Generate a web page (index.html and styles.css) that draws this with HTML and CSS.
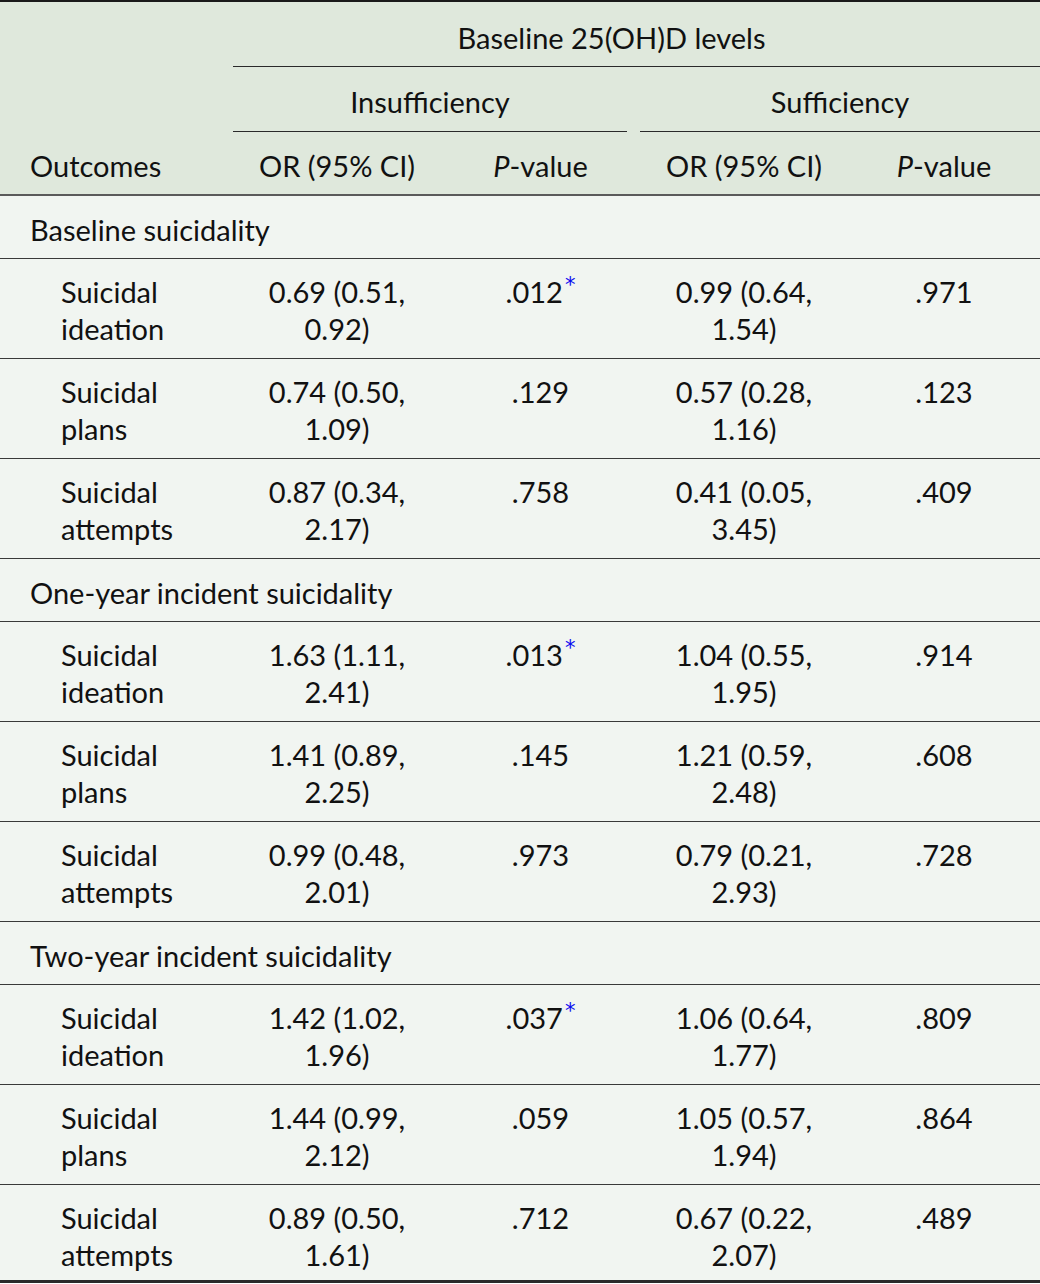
FILE: index.html
```html
<!DOCTYPE html>
<html>
<head>
<meta charset="utf-8">
<link rel="stylesheet" href="styles.css">
</head>
<body>
<table class="tbl">
  <colgroup>
    <col class="c1"><col class="c2"><col class="c3"><col class="c4"><col class="c5">
  </colgroup>
  <thead>
    <tr class="h1">
      <th></th>
      <th colspan="4" class="span-top"><span class="shift">Baseline 25(OH)D levels</span></th>
    </tr>
    <tr class="h2">
      <th></th>
      <th colspan="2" class="grp grp-left"><div class="grp-label">Insufficiency</div></th>
      <th colspan="2" class="grp grp-right"><div class="grp-label">Sufficiency</div></th>
    </tr>
    <tr class="h3">
      <th class="first">Outcomes</th>
      <th>OR (95% CI)</th>
      <th><i>P</i>-value</th>
      <th>OR (95% CI)</th>
      <th><i>P</i>-value</th>
    </tr>
  </thead>
  <tbody>
    <tr class="section"><td colspan="5">Baseline suicidality</td></tr>
    <tr><td class="lbl">Suicidal ideation</td><td>0.69 (0.51, 0.92)</td><td>.012<sup class="star">*</sup></td><td>0.99 (0.64, 1.54)</td><td>.971</td></tr>
    <tr><td class="lbl">Suicidal plans</td><td>0.74 (0.50, 1.09)</td><td>.129</td><td>0.57 (0.28, 1.16)</td><td>.123</td></tr>
    <tr><td class="lbl">Suicidal attempts</td><td>0.87 (0.34, 2.17)</td><td>.758</td><td>0.41 (0.05, 3.45)</td><td>.409</td></tr>
    <tr class="section"><td colspan="5">One-year incident suicidality</td></tr>
    <tr><td class="lbl">Suicidal ideation</td><td>1.63 (1.11, 2.41)</td><td>.013<sup class="star">*</sup></td><td>1.04 (0.55, 1.95)</td><td>.914</td></tr>
    <tr><td class="lbl">Suicidal plans</td><td>1.41 (0.89, 2.25)</td><td>.145</td><td>1.21 (0.59, 2.48)</td><td>.608</td></tr>
    <tr><td class="lbl">Suicidal attempts</td><td>0.99 (0.48, 2.01)</td><td>.973</td><td>0.79 (0.21, 2.93)</td><td>.728</td></tr>
    <tr class="section"><td colspan="5">Two-year incident suicidality</td></tr>
    <tr><td class="lbl">Suicidal ideation</td><td>1.42 (1.02, 1.96)</td><td>.037<sup class="star">*</sup></td><td>1.06 (0.64, 1.77)</td><td>.809</td></tr>
    <tr><td class="lbl">Suicidal plans</td><td>1.44 (0.99, 2.12)</td><td>.059</td><td>1.05 (0.57, 1.94)</td><td>.864</td></tr>
    <tr class="last"><td class="lbl">Suicidal attempts</td><td>0.89 (0.50, 1.61)</td><td>.712</td><td>0.67 (0.22, 2.07)</td><td>.489</td></tr>
  </tbody>
</table>
</body>
</html>
```

FILE: styles.css
```css
html, body {
  margin: 0;
  padding: 0;
  background: #ffffff;
}

.tbl {
  width: 1040px;
  border-collapse: collapse;
  table-layout: fixed;
  font-family: Lato, "Noto Sans", sans-serif;
  font-size: 29px;
  line-height: 37px;
  color: #111;
  border-top: 2px solid #1a1a1a;
  border-bottom: 3px solid #2a2a2a;
}

.c1 { width: 233px; }
.c2 { width: 208px; }
.c3 { width: 199px; }
.c4 { width: 208px; }
.c5 { width: 192px; }

thead tr {
  background: #dfe8dc;
}

thead th {
  font-weight: normal;
  text-align: center;
  padding: 14px 10px 13px;
  vertical-align: bottom;
}

thead th.first {
  text-align: left;
  padding-left: 30px;
}

.h1 th {
  padding-top: 17px;
  padding-bottom: 10px;
}

.span-top {
  border-bottom: 1px solid #2a2a2a;
}

.shift {
  display: inline-block;
  padding-right: 50px;
}

.h2 th {
  padding-top: 16px;
}

.h2 th.grp {
  padding-left: 0;
  padding-right: 0;
  padding-bottom: 0;
}

.grp-label {
  border-bottom: 1px solid #2a2a2a;
  padding-bottom: 11px;
}

.grp-left .grp-label {
  margin-right: 13px;
}

.h3 th {
  padding-top: 15px;
  padding-bottom: 10px;
  border-bottom: 2px solid #5a5a5a;
}

tbody tr {
  background: #f1f5f1;
}

tbody td {
  padding: 14px 30px 11px;
  text-align: center;
  vertical-align: top;
  border-bottom: 1px solid #3a3a3a;
}

tbody tr.last td {
  border-bottom: none;
  padding-bottom: 7px;
}

tbody tr.section td {
  text-align: left;
  padding: 15px 30px 10px;
}

tbody td.lbl {
  text-align: left;
  padding-left: 61px;
  padding-right: 20px;
}

.star {
  color: #0a0af0;
  font-family: "DejaVu Sans", sans-serif;
  font-size: 21px;
  line-height: 0;
  vertical-align: 0;
  position: relative;
  top: -11px;
  margin-left: 2px;
}
```
